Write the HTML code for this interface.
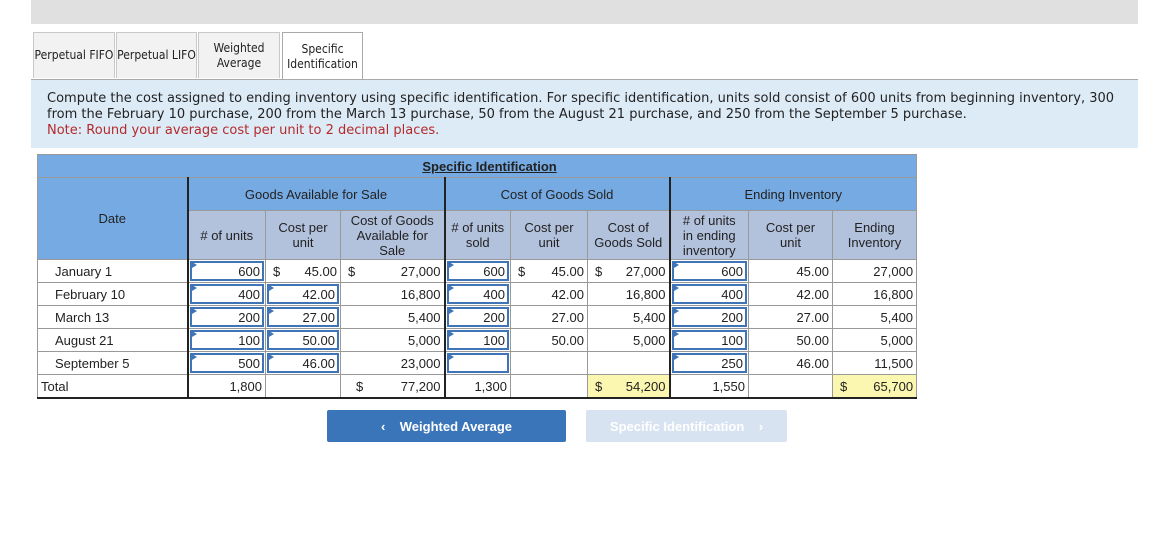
<!DOCTYPE html>
<html><head><meta charset="utf-8"><style>
body{margin:0;width:1169px;height:560px;background:#fff;position:relative;overflow:hidden;font-family:"Liberation Sans",Arial,sans-serif}
.a{position:absolute}
.top{left:31px;top:0;width:1107px;height:24px;background:#e0e0e0}
.tab{position:absolute;top:32px;height:46px;border:1px solid #c8c8c8;border-bottom:none;background:#f2f2f2;font-family:"DejaVu Sans Condensed","Liberation Sans Narrow",sans-serif;font-size:12px;color:#222;display:flex;align-items:center;justify-content:center;text-align:center;line-height:15px;box-sizing:border-box;white-space:nowrap}
.tab.sel{background:#fff;border-color:#aaa;height:48px}
.line{left:31px;top:79px;width:1107px;height:1px;background:#aaa}
.info{left:31px;top:80px;width:1107px;height:68px;background:#ddebf7;font-family:"DejaVu Sans",Verdana,sans-serif;font-size:13px;color:#222;line-height:16px;box-sizing:border-box;padding:11px 0 0 16px;white-space:nowrap}
.info .n{color:#b42a2a}
table{position:absolute;left:37px;top:154px;border-collapse:collapse;table-layout:fixed;width:879px;font-size:13px;color:#222}
td{border:1px solid #999;padding:0;height:22px;position:relative}
.t1 td{background:#76aae2;height:22px;text-align:center}
.t2 td{background:#76aae2;height:32px;text-align:center}
.t3 td{background:#b2c1dc;height:48px;text-align:center;line-height:15px}
.r{text-align:right;padding-right:3px}
.in{position:absolute;left:1px;top:1px;right:1px;bottom:1px;border:2px solid #3f74b6;text-align:right;padding-right:2px;line-height:17px;box-sizing:border-box}
.in:before{content:"";position:absolute;left:0;top:0;border-left:5px solid #3f74b6;border-top:3px solid transparent;border-bottom:3px solid transparent;margin-top:-1px}
.d{padding-left:17px}
.y{background:#fbf6b0}
.dl{float:left;padding-left:7px}
.bl{border-left:2px solid #222}
.btn{position:absolute;top:410px;height:32px;border-radius:2px;font-weight:bold;font-size:13px;color:#fff;display:flex;align-items:center;justify-content:center}
</style></head><body>
<div class="a top"></div>
<div class="tab" style="left:33px;width:82px">Perpetual FIFO</div>
<div class="tab" style="left:116px;width:81px">Perpetual LIFO</div>
<div class="tab" style="left:198px;width:82px">Weighted<br>Average</div>
<div class="tab sel" style="left:282px;width:81px">Specific<br>Identification</div>
<div class="a line"></div>
<div class="a info">Compute the cost assigned to ending inventory using specific identification. For specific identification, units sold consist of 600 units from beginning inventory, 300<br>from the February 10 purchase, 200 from the March 13 purchase, 50 from the August 21 purchase, and 250 from the September 5 purchase.<br><span class="n">Note: Round your average cost per unit to 2 decimal places.</span></div>
<table>
<colgroup><col style="width:150px"><col style="width:78px"><col style="width:75px"><col style="width:104px"><col style="width:66px"><col style="width:77px"><col style="width:82px"><col style="width:79px"><col style="width:84px"><col style="width:84px"></colgroup>
<tr class="t1"><td colspan="10" style="font-weight:bold;padding-left:25px"><u>Specific Identification</u></td></tr>
<tr class="t2"><td rowspan="2" style="vertical-align:top;padding-top:33px;height:auto">Date</td><td colspan="3" class="bl">Goods Available for Sale</td><td colspan="3" class="bl">Cost of Goods Sold</td><td colspan="3" class="bl">Ending Inventory</td></tr>
<tr class="t3"><td class="bl"># of units</td><td>Cost per<br>unit</td><td>Cost of Goods<br>Available for<br>Sale</td><td class="bl"># of units<br>sold</td><td>Cost per<br>unit</td><td>Cost of<br>Goods Sold</td><td class="bl"># of units<br>in ending<br>inventory</td><td>Cost per<br>unit</td><td>Ending<br>Inventory</td></tr>
<tr><td class="d">January 1</td><td class="bl"><div class="in">600</div></td><td class="r"><span class="dl">$</span>45.00</td><td class="r"><span class="dl">$</span>27,000</td><td class="bl"><div class="in">600</div></td><td class="r"><span class="dl">$</span>45.00</td><td class="r"><span class="dl">$</span>27,000</td><td class="bl"><div class="in">600</div></td><td class="r">45.00</td><td class="r">27,000</td></tr>
<tr><td class="d">February 10</td><td class="bl"><div class="in">400</div></td><td><div class="in">42.00</div></td><td class="r">16,800</td><td class="bl"><div class="in">400</div></td><td class="r">42.00</td><td class="r">16,800</td><td class="bl"><div class="in">400</div></td><td class="r">42.00</td><td class="r">16,800</td></tr>
<tr><td class="d">March 13</td><td class="bl"><div class="in">200</div></td><td><div class="in">27.00</div></td><td class="r">5,400</td><td class="bl"><div class="in">200</div></td><td class="r">27.00</td><td class="r">5,400</td><td class="bl"><div class="in">200</div></td><td class="r">27.00</td><td class="r">5,400</td></tr>
<tr><td class="d">August 21</td><td class="bl"><div class="in">100</div></td><td><div class="in">50.00</div></td><td class="r">5,000</td><td class="bl"><div class="in">100</div></td><td class="r">50.00</td><td class="r">5,000</td><td class="bl"><div class="in">100</div></td><td class="r">50.00</td><td class="r">5,000</td></tr>
<tr><td class="d">September 5</td><td class="bl"><div class="in">500</div></td><td><div class="in">46.00</div></td><td class="r">23,000</td><td class="bl"><div class="in"></div></td><td></td><td></td><td class="bl"><div class="in">250</div></td><td class="r">46.00</td><td class="r">11,500</td></tr>
<tr style="border-bottom:2px solid #222"><td style="padding-left:3px">Total</td><td class="r bl">1,800</td><td></td><td class="r"><span class="dl" style="padding-left:15px">$</span>77,200</td><td class="r bl">1,300</td><td></td><td class="r y"><span class="dl">$</span>54,200</td><td class="r bl">1,550</td><td></td><td class="r y"><span class="dl">$</span>65,700</td></tr>
</table>
<div class="btn" style="left:327px;width:239px;background:#3a74b9">‹&nbsp;&nbsp;&nbsp;&nbsp;Weighted Average</div>
<div class="btn" style="left:586px;width:201px;background:#d8e3f1">Specific Identification&nbsp;&nbsp;&nbsp;&nbsp;›</div>
</body></html>
